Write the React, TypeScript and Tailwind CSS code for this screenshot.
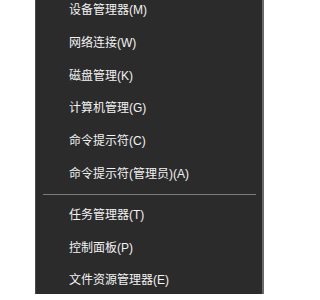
import React from "react";

const topItems = [
  "设备管理器(M)",
  "网络连接(W)",
  "磁盘管理(K)",
  "计算机管理(G)",
  "命令提示符(C)",
  "命令提示符(管理员)(A)",
];

const bottomItems = ["任务管理器(T)", "控制面板(P)", "文件资源管理器(E)"];

const MenuItem: React.FC<{ label: string }> = ({ label }) => (
  <div className="h-[32.8px] flex items-center pl-[33px] text-[12px] leading-none text-[#f2f2f2]">
    {label}
  </div>
);

const App: React.FC = () => {
  return (
    <div
      className="w-[300px] h-[300px] overflow-hidden bg-white"
      style={{ fontFamily: '"Liberation Sans", "Noto Sans CJK SC", sans-serif' }}
    >
      <div className="ml-[35px] w-[229px] h-[300px] bg-[#2b2b2b] border-l border-l-[#4a4a4a] border-r-2 border-r-[#6a6a6a]">
        <div className="mt-[-6.4px]">
          {topItems.map((item) => (
            <MenuItem key={item} label={item} />
          ))}
          <div className="h-[8px] flex items-center pl-[7px] pr-[6px]">
            <div className="h-px w-full bg-[#7a7a7a]" />
          </div>
          {bottomItems.map((item) => (
            <MenuItem key={item} label={item} />
          ))}
        </div>
      </div>
    </div>
  );
};

export default App;
